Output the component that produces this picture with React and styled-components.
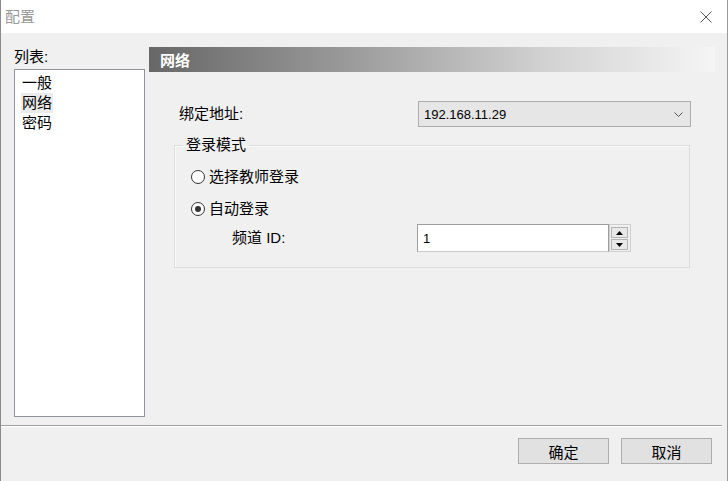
import styled, { createGlobalStyle } from "styled-components";

const GlobalStyle = createGlobalStyle`
  * { box-sizing: border-box; }
  body {
    margin: 0;
    font-family: "Liberation Sans", "Noto Sans CJK SC", sans-serif;
    font-size: 15px;
    color: #000;
  }
`;

const Window = styled.div`
  width: 728px;
  height: 481px;
  display: flex;
  flex-direction: column;
  background: #f0f0f0;
  border-left: 1px solid #8a8a8a;
  border-right: 1px solid #9a9a9a;
`;

const TitleBar = styled.div`
  height: 33px;
  flex: none;
  display: flex;
  align-items: center;
  justify-content: space-between;
  padding: 0 15px 0 4px;
  background: #fff;
`;

const Title = styled.span`
  color: #999;
  font-size: 15px;
  line-height: 20px;
`;

const Main = styled.div`
  flex: 1;
  display: flex;
`;

const LeftCol = styled.div`
  width: 144px;
  padding: 14px 0 0 13px;
  display: flex;
  flex-direction: column;
`;

const Label = styled.span`
  line-height: 20px;
  white-space: nowrap;
  width: ${(p) => p.w || "auto"};
  flex: none;
`;

const ListBox = styled.div`
  margin-top: 2px;
  width: 131px;
  height: 348px;
  background: #fff;
  border: 1px solid #8f939c;
  padding: 3px 0 0 6px;
`;

const ListItem = styled.div`
  line-height: 20px;
  width: fit-content;
  padding: 0 1px;
  background: ${(p) => (p.selected ? "#ebebeb" : "transparent")};
`;

const RightCol = styled.div`
  width: 566px;
  margin-left: 4px;
  padding-top: 14px;
`;

const Header = styled.div`
  height: 25px;
  padding-left: 11px;
  display: flex;
  align-items: center;
  color: #fff;
  font-weight: bold;
  font-size: 15px;
  background: linear-gradient(to right, #676767 0%, #9a9a9a 35%, #d2d2d2 70%, #f5f5f5 100%);
`;

const Form = styled.div`
  padding-left: 25px;
`;

const Row = styled.div`
  display: flex;
  align-items: center;
  margin-top: ${(p) => p.mt || 0}px;
  padding-left: ${(p) => p.pl || 0}px;
`;

const Combo = styled.div`
  width: 273px;
  height: 26px;
  background: #e6e6e6;
  border: 1px solid #adadad;
  display: flex;
  align-items: center;
  justify-content: space-between;
  padding: 0 7px 0 5px;
  font-size: 13px;
`;

const Group = styled.fieldset`
  width: 516px;
  margin: 8px 0 0 0;
  padding: 12px 0 15px 16px;
  border: 1px solid #dcdcdc;
  box-shadow: inset 1px 1px 0 #fafafa;
`;

const Legend = styled.legend`
  margin-left: -8px;
  padding: 0 3px;
  line-height: 20px;
`;

const Radio = styled.span`
  width: 14px;
  height: 14px;
  border-radius: 50%;
  border: 1px solid #333;
  background: #fff;
  margin-right: 4px;
  display: flex;
  align-items: center;
  justify-content: center;
  flex: none;

  &::after {
    content: "";
    width: 6px;
    height: 6px;
    border-radius: 50%;
    background: ${(p) => (p.checked ? "#333" : "transparent")};
  }
`;

const SpinBox = styled.div`
  display: flex;
  align-items: stretch;
`;

const SpinInput = styled.div`
  width: 192px;
  height: 28px;
  background: #fff;
  border: 1px solid #9e9e9e;
  border-bottom-color: #c8c8c8;
  display: flex;
  align-items: center;
  padding-left: 5px;
  font-size: 13px;
`;

const SpinButtons = styled.div`
  width: 22px;
  height: 28px;
  border: 1px solid #cfcfcf;
  padding: 2px 2px 1px 1px;
  display: flex;
  flex-direction: column;
  gap: 1px;
`;

const SpinButton = styled.div`
  flex: 1;
  background: #e8e8e8;
  border: 1px solid #b4b4b4;
  display: flex;
  align-items: center;
  justify-content: center;
`;

const Divider = styled.div`
  height: 2px;
  margin-right: 5px;
  border-top: 1px solid #a0a0a0;
  border-bottom: 1px solid #fff;
`;

const Footer = styled.div`
  height: 54px;
  flex: none;
  display: flex;
  justify-content: flex-end;
  gap: 12px;
  padding: 11px 15px 0 0;
`;

const Button = styled.button`
  width: 91px;
  height: 26px;
  background: #e1e1e1;
  border: 1px solid #adadad;
  font-family: inherit;
  font-size: 15px;
  padding: 0;
  color: #000;
`;

const Triangle = ({ up }) => (
  <svg width="7" height="4" viewBox="0 0 7 4">
    <path d={up ? "M0 4 L3.5 0 L7 4 Z" : "M0 0 L7 0 L3.5 4 Z"} fill="#000" />
  </svg>
);

export default function App() {
  return (
    <>
      <GlobalStyle />
      <Window>
        <TitleBar>
          <Title>配置</Title>
          <svg width="12" height="12" viewBox="0 0 12 12">
            <path d="M0.5 0.5 L11.5 11.5 M11.5 0.5 L0.5 11.5" stroke="#555" strokeWidth="1" />
          </svg>
        </TitleBar>
        <Main>
          <LeftCol>
            <Label>列表:</Label>
            <ListBox>
              <ListItem>一般</ListItem>
              <ListItem selected>网络</ListItem>
              <ListItem>密码</ListItem>
            </ListBox>
          </LeftCol>
          <RightCol>
            <Header>网络</Header>
            <Form>
              <Row mt={29} pl={5}>
                <Label w="239px">绑定地址:</Label>
                <Combo>
                  <span>192.168.11.29</span>
                  <svg width="9" height="5" viewBox="0 0 9 5">
                    <path d="M0.5 0.5 L4.5 4.5 L8.5 0.5" stroke="#555" fill="none" strokeWidth="1" />
                  </svg>
                </Combo>
              </Row>
              <Group>
                <Legend>登录模式</Legend>
                <Row>
                  <Radio />
                  <Label>选择教师登录</Label>
                </Row>
                <Row mt={12}>
                  <Radio checked />
                  <Label>自动登录</Label>
                </Row>
                <Row mt={5} pl={41}>
                  <Label w="185px">频道 ID:</Label>
                  <SpinBox>
                    <SpinInput>1</SpinInput>
                    <SpinButtons>
                      <SpinButton><Triangle up /></SpinButton>
                      <SpinButton><Triangle /></SpinButton>
                    </SpinButtons>
                  </SpinBox>
                </Row>
              </Group>
            </Form>
          </RightCol>
        </Main>
        <Divider />
        <Footer>
          <Button>确定</Button>
          <Button>取消</Button>
        </Footer>
      </Window>
    </>
  );
}
